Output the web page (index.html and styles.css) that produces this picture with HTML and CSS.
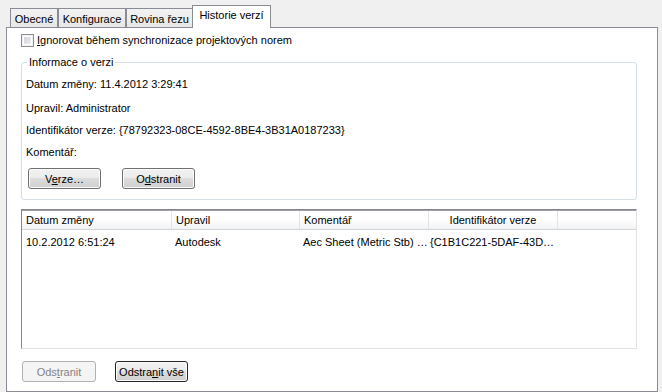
FILE: index.html
```html
<!DOCTYPE html>
<html lang="cs">
<head>
<meta charset="utf-8">
<title>Historie verzí</title>
<link rel="stylesheet" href="styles.css">
</head>
<body>
<div class="tabs">
  <div class="tab t1">Obecné</div>
  <div class="tab t2">Konfigurace</div>
  <div class="tab t3">Rovina řezu</div>
  <div class="tab active">Historie verzí</div>
</div>
<div class="panel">
  <label class="chk-row"><span class="chk"></span><span><u>I</u>gnorovat během synchronizace projektových norem</span></label>
  <fieldset class="group">
    <legend>Informace o verzi</legend>
    <div class="line first">Datum změny: 11.4.2012 3:29:41</div>
    <div class="line">Upravil: Administrator</div>
    <div class="line">Identifikátor verze: {78792323-08CE-4592-8BE4-3B31A0187233}</div>
    <div class="line">Komentář:</div>
    <div class="btns">
      <button class="btn">V<u>e</u>rze…</button>
      <button class="btn">O<u>d</u>stranit</button>
    </div>
  </fieldset>
  <div class="list">
    <div class="hdr">
      <div class="c c1">Datum změny</div>
      <div class="c c2">Upravil</div>
      <div class="c c3">Komentář</div>
      <div class="c c4 center">Identifikátor verze</div>
      <div class="c c5"></div>
    </div>
    <div class="row">
      <div class="c c1">10.2.2012 6:51:24</div>
      <div class="c c2">Autodesk</div>
      <div class="c c3">Aec Sheet (Metric Stb) …</div>
      <div class="c c4">{C1B1C221-5DAF-43D…</div>
    </div>
  </div>
  <div class="bottom-btns">
    <button class="btn disabled" disabled>Ods<u>t</u>ranit</button>
    <button class="btn default">Odstra<u>n</u>it vše</button>
  </div>
</div>
</body>
</html>
```
FILE: styles.css
```css
html, body {
  margin: 0;
  padding: 0;
}
body {
  background: #f0f0f0;
  font-family: "Liberation Sans", Arial, sans-serif;
  font-size: 11px;
  color: #000;
  width: 662px;
  height: 392px;
  overflow: hidden;
}
.tabs {
  display: flex;
  align-items: flex-end;
  height: 27px;
  padding-left: 10px;
  box-sizing: border-box;
}
.tab {
  box-sizing: border-box;
  height: 19px;
  border: 1px solid #898c95;
  border-bottom: none;
  background: linear-gradient(#f2f2f2, #e8e8e8);
  text-align: center;
  line-height: 20px;
  white-space: nowrap;
}
.t1 { width: 48px; }
.t2 { width: 68px; }
.t3 { width: 67px; }
.tab.active {
  width: 79px;
  height: 23px;
  margin-left: -1px;
  margin-bottom: -1px;
  background: #fff;
  line-height: 19px;
  position: relative;
  z-index: 1;
}
.panel {
  box-sizing: border-box;
  margin-left: 6px;
  width: 652px;
  height: 365px;
  border: 1px solid #898c95;
  background: #fff;
  padding: 6px 0 0 14px;
}
.chk-row {
  display: flex;
  align-items: center;
  gap: 3px;
  height: 13px;
  line-height: 13px;
}
.chk {
  box-sizing: border-box;
  width: 13px;
  height: 13px;
  border: 1px solid #8f8f8f;
  background: linear-gradient(135deg, #c8ccd2, #f4f5f7);
  box-shadow: inset 0 0 0 1px #f0f0f0, inset 0 0 0 2px #fff;
}
.group {
  box-sizing: border-box;
  width: 616px;
  margin: 8px 0 0 0;
  padding: 4px 4px 10px 4px;
  border: 1px solid #d5dfe5;
  border-radius: 3px;
  min-inline-size: 0;
}
.group legend {
  padding: 0 2px;
  margin-left: 1px;
  line-height: 14px;
}
.line {
  line-height: 22px;
  height: 22px;
  white-space: nowrap;
}
.line.first {
  margin-bottom: 2px;
}
.btns {
  display: flex;
  gap: 21px;
  margin-top: 5px;
  padding-left: 2px;
}
.btn {
  box-sizing: border-box;
  width: 73px;
  height: 21px;
  padding: 0;
  border: 1px solid #707070;
  border-radius: 3px;
  background: linear-gradient(#f2f2f2 0%, #ebebeb 45%, #dddddd 50%, #cfcfcf 100%);
  box-shadow: inset 0 0 0 1px #fbfbfb;
  font-family: inherit;
  font-size: 11px;
  color: #000;
  text-align: center;
}
.btn.disabled {
  width: 74px;
  border-color: #adb2b5;
  background: #f4f4f4;
  box-shadow: none;
  color: #838383;
}
.btn.default {
  border-color: #262626;
}
.list {
  box-sizing: border-box;
  width: 616px;
  height: 140px;
  margin-top: 9px;
  border-top: 1px solid #828790;
  border-left: 1px solid #828790;
  border-right: 1px solid #e3e3e3;
  border-bottom: 1px solid #e3e3e3;
  background: #fff;
}
.hdr {
  display: flex;
  height: 20px;
  box-sizing: border-box;
  border-top: 1px solid #a0a0a0;
  border-bottom: 1px solid #d5d5d5;
  background: linear-gradient(#ffffff 0%, #ffffff 45%, #f1f2f4 100%);
}
.hdr .c {
  border-right: 1px solid #e3e4e6;
  line-height: 19px;
}
.hdr .c5 {
  border-right: none;
  flex: 1;
}
.c {
  box-sizing: border-box;
  padding-left: 4px;
  white-space: nowrap;
  overflow: hidden;
}
.c1 { width: 150px; }
.c2 { width: 128px; }
.c3 { width: 129px; }
.c4 { width: 129px; }
.center { text-align: center; padding-left: 0; }
.row {
  display: flex;
  height: 24px;
  line-height: 24px;
}
.row .c2 { padding-left: 3px; }
.row .c3 { padding-left: 3px; }
.row .c4 { padding-left: 1px; }
.bottom-btns {
  display: flex;
  gap: 19px;
  margin-top: 12px;
  padding-left: 1px;
}
```
